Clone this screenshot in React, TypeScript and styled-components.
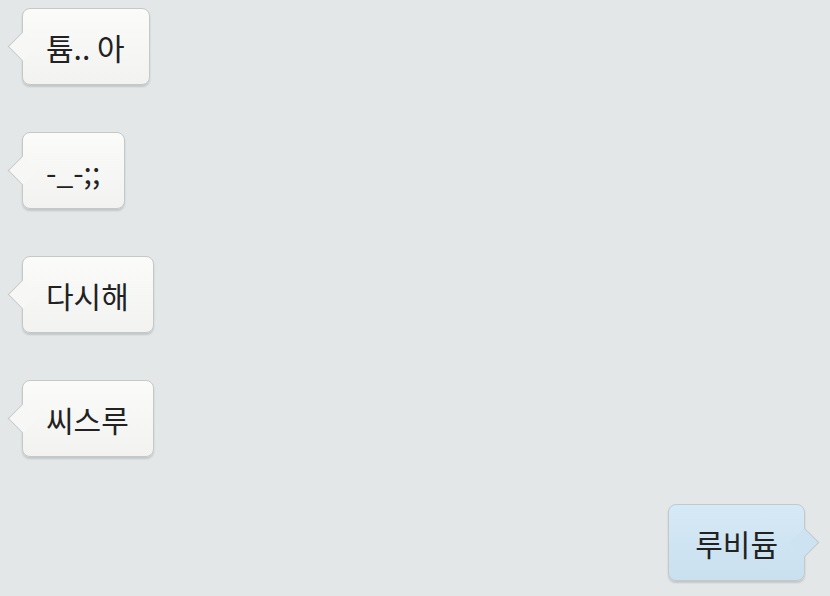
import styled, { createGlobalStyle, css } from "styled-components";

const GlobalStyle = createGlobalStyle`
  html, body {
    margin: 0;
    padding: 0;
    background: #e3e7e8;
  }
  body {
    font-family: "Noto Sans CJK KR", "Noto Sans", sans-serif;
  }
`;

const Screen = styled.div`
  width: 830px;
  height: 596px;
  box-sizing: border-box;
  padding: 8px 25px 0 22px;
  display: flex;
  flex-direction: column;
  gap: 47px;
  background: #e3e7e8;
  overflow: hidden;
`;

const Row = styled.div<{ $mine?: boolean }>`
  display: flex;
  justify-content: ${(p) => (p.$mine ? "flex-end" : "flex-start")};
`;

const Bubble = styled.div<{ $mine?: boolean }>`
  position: relative;
  box-sizing: border-box;
  height: 77px;
  padding: ${(p) => (p.$mine ? "0 26px 0 26px" : "0 24px 0 23px")};
  display: flex;
  align-items: center;
  font-size: 30px;
  line-height: 1;
  color: #222;
  border-radius: 8px;
  border: 1px solid #c4c8c9;
  box-shadow: 0 2px 2px rgba(0, 0, 0, 0.14);
  background: ${(p) =>
    p.$mine
      ? "linear-gradient(#d6e9f6, #c9e0ef)"
      : "linear-gradient(#fbfbfa, #f2f3f1)"};

  &::before {
    content: "";
    position: absolute;
    top: 50%;
    width: 20px;
    height: 20px;
    margin-top: -11px;
    border: 1px solid #c4c8c9;
    background: ${(p) => (p.$mine ? "#cde3f2" : "#f7f7f6")};
    transform: rotate(45deg);
    ${(p) =>
      p.$mine
        ? css`
            right: -11px;
            border-left: none;
            border-bottom: none;
          `
        : css`
            left: -11px;
            border-top: none;
            border-right: none;
          `}
  }
`;

const Text = styled.span`
  position: relative;
  white-space: pre;
`;

const messages = [
  { text: "튬.. 아" },
  { text: "-_-;;" },
  { text: "다시해" },
  { text: "씨스루" },
  { text: "루비듐", mine: true },
];

export default function App() {
  return (
    <>
      <GlobalStyle />
      <Screen>
        {messages.map((m, i) => (
          <Row key={i} $mine={m.mine}>
            <Bubble $mine={m.mine}>
              <Text>{m.text}</Text>
            </Bubble>
          </Row>
        ))}
      </Screen>
    </>
  );
}
